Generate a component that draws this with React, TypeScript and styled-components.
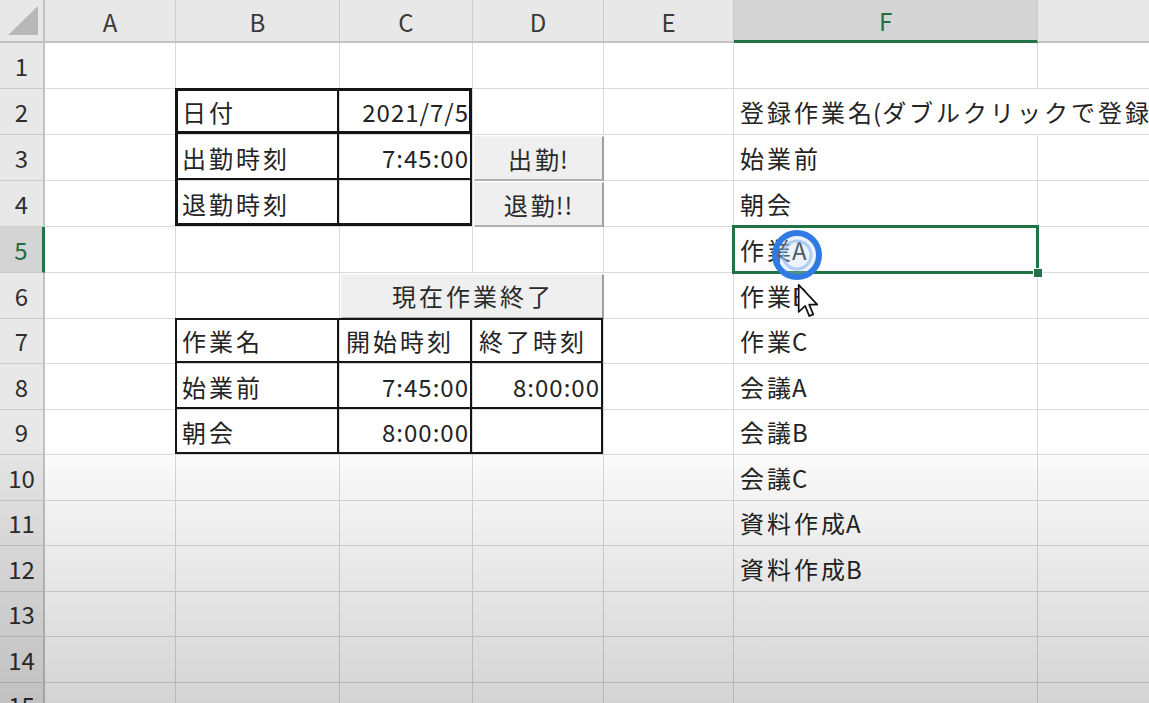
import { Fragment } from 'react';
import styled, { createGlobalStyle, css } from 'styled-components';

const GlobalStyle = createGlobalStyle`
  html, body {
    margin: 0;
    padding: 0;
    background: #fff;
    overflow: hidden;
  }
  body {
    font-family: "Noto Sans CJK JP", "Noto Sans", sans-serif;
  }
`;

type Frame = [number, number, number, number]; // top right bottom left

type CellSpec = {
  text?: string;
  align?: 'left' | 'right';
  frame?: Frame;
  button?: boolean;
  span?: number;
  active?: boolean;
  spill?: boolean;
};

const LETTERS = ['A', 'B', 'C', 'D', 'E', 'F', 'G'];
const ROWS = Array.from({ length: 15 }, (_, i) => i + 1);

const data: Record<number, Record<string, CellSpec>> = {
  2: {
    B: { text: '日付', frame: [3, 2, 3, 3] },
    C: { text: '2021/7/5', align: 'right', frame: [3, 3, 3, 0] },
    F: { text: '登録作業名(ダブルクリックで登録', spill: true },
  },
  3: {
    B: { text: '出勤時刻', frame: [0, 2, 2, 3] },
    C: { text: '7:45:00', align: 'right', frame: [0, 2, 2, 0] },
    D: { text: '出勤!', button: true },
    F: { text: '始業前' },
  },
  4: {
    B: { text: '退勤時刻', frame: [0, 2, 3, 3] },
    C: { frame: [0, 2, 3, 0] },
    D: { text: '退勤!!', button: true },
    F: { text: '朝会' },
  },
  5: {
    F: { text: '作業A', active: true },
  },
  6: {
    C: { text: '現在作業終了', button: true, span: 2 },
    F: { text: '作業B' },
  },
  7: {
    B: { text: '作業名', frame: [2, 2, 2, 2] },
    C: { text: '開始時刻', frame: [2, 2, 2, 0] },
    D: { text: '終了時刻', frame: [2, 2, 2, 0] },
    F: { text: '作業C' },
  },
  8: {
    B: { text: '始業前', frame: [0, 2, 2, 2] },
    C: { text: '7:45:00', align: 'right', frame: [0, 2, 2, 0] },
    D: { text: '8:00:00', align: 'right', frame: [0, 2, 2, 0] },
    F: { text: '会議A' },
  },
  9: {
    B: { text: '朝会', frame: [0, 2, 2, 2] },
    C: { text: '8:00:00', align: 'right', frame: [0, 2, 2, 0] },
    D: { frame: [0, 2, 2, 0] },
    F: { text: '会議B' },
  },
  10: { F: { text: '会議C' } },
  11: { F: { text: '資料作成A' } },
  12: { F: { text: '資料作成B' } },
};

const GREEN = '#217346';
const GRID = '#d9d9d9';

const Sheet = styled.div`
  position: relative;
  display: grid;
  grid-template-columns: 45px 131px 164px 133px 131px 130px 304px 300px;
  grid-template-rows: 43px repeat(5, 46px) repeat(10, 45.5px);
  width: 1149px;
  height: 703px;
  overflow: hidden;
  font-size: 24px;
  letter-spacing: 1px;
  color: #242424;

  &::after {
    content: '';
    position: absolute;
    inset: 0;
    pointer-events: none;
    z-index: 5;
    background: linear-gradient(
      to bottom,
      rgba(0, 0, 0, 0) 445px,
      rgba(0, 0, 0, 0.03) 470px,
      rgba(0, 0, 0, 0.17) 703px
    );
  }
`;

const Corner = styled.div`
  display: flex;
  align-items: flex-end;
  justify-content: flex-end;
  padding: 0 5px 6px 0;
  background: #e8e8e8;
  border-right: 2px solid #c2c2c2;
  border-bottom: 2px solid #c2c2c2;
`;

const CornerMark = styled.div`
  width: 30px;
  height: 29px;
  background: #b8b8b8;
  clip-path: polygon(100% 0, 100% 100%, 0 100%);
`;

const ColHead = styled.div<{ $active?: boolean }>`
  display: flex;
  align-items: center;
  justify-content: center;
  padding-top: 1px;
  background: ${p => (p.$active ? '#d4d4d4' : '#e8e8e8')};
  color: ${p => (p.$active ? '#1f6e43' : '#3a3a3a')};
  border-right: 1px solid #cbcbcb;
  border-bottom: ${p => (p.$active ? `3px solid ${GREEN}` : '2px solid #c2c2c2')};
  letter-spacing: 0;
`;

const RowHead = styled.div<{ $active?: boolean }>`
  display: flex;
  align-items: center;
  justify-content: center;
  background: ${p => (p.$active ? '#d4d4d4' : '#e8e8e8')};
  color: ${p => (p.$active ? '#1f6e43' : '#2e2e2e')};
  border-right: ${p => (p.$active ? `3px solid ${GREEN}` : '2px solid #c2c2c2')};
  border-bottom: 1px solid #cbcbcb;
  letter-spacing: 0;
`;

const Cell = styled.div<{ $align?: string; $frame?: Frame; $active?: boolean; $spill?: boolean }>`
  position: relative;
  display: flex;
  align-items: center;
  justify-content: ${p => (p.$align === 'right' ? 'flex-end' : 'flex-start')};
  padding: 0 3px 0 6px;
  min-width: 0;
  white-space: nowrap;
  border-right: 1px solid ${p => (p.$spill ? 'transparent' : GRID)};
  border-bottom: 1px solid ${GRID};

  ${p =>
    p.$frame &&
    css`
      &::after {
        content: '';
        position: absolute;
        top: -1px;
        left: -1px;
        right: 0;
        bottom: 0;
        border-style: solid;
        border-color: #151515;
        border-width: ${p.$frame.map(w => `${w}px`).join(' ')};
        pointer-events: none;
        z-index: 1;
      }
    `}

  ${p =>
    p.$active &&
    css`
      &::after {
        content: '';
        position: absolute;
        top: -2px;
        left: -2px;
        right: -2px;
        bottom: -2px;
        border: 3px solid ${GREEN};
        pointer-events: none;
        z-index: 2;
      }
      &::before {
        content: '';
        position: absolute;
        right: -6px;
        bottom: -6px;
        width: 8px;
        height: 8px;
        background: ${GREEN};
        border: 1px solid #fff;
        z-index: 3;
      }
    `}
`;

// kanji / kana run a little wider than the latin glyphs in the source font
const Wide = styled.span`
  letter-spacing: 3px;
  margin-right: -2px;
`;

const SheetButton = styled.div<{ $span?: number }>`
  grid-column: span ${p => p.$span ?? 1};
  display: flex;
  align-items: center;
  justify-content: center;
  margin: 1px 0 0 1px;
  background: #efefef;
  color: #2a2a2a;
  border-top: 1px solid #f6f6f6;
  border-left: 1px solid #f2f2f2;
  border-right: 2px solid #9e9e9e;
  border-bottom: 2px solid #b0b0b0;
`;

const ClickRing = styled.svg`
  position: absolute;
  left: 769px;
  top: 227px;
  width: 56px;
  height: 56px;
  z-index: 6;
  pointer-events: none;
`;

const Pointer = styled.svg`
  position: absolute;
  left: 797px;
  top: 283px;
  width: 22px;
  height: 36px;
  z-index: 7;
  pointer-events: none;
`;

const CJK = /([\u3000-\u30ff\u4e00-\u9fff]+)/;

function Label({ text }: { text?: string }) {
  if (!text) return null;
  return (
    <>
      {text.split(CJK).map((part, i) =>
        CJK.test(part) ? <Wide key={i}>{part}</Wide> : <Fragment key={i}>{part}</Fragment>
      )}
    </>
  );
}

function renderRow(r: number) {
  const specs = data[r] ?? {};
  const out = [];
  let skip = 0;
  for (const letter of LETTERS) {
    if (skip > 0) {
      skip--;
      continue;
    }
    const s = specs[letter];
    const key = `${letter}${r}`;
    if (s?.button) {
      skip = (s.span ?? 1) - 1;
      out.push(
        <SheetButton key={key} $span={s.span}>
          <Label text={s.text} />
        </SheetButton>
      );
      continue;
    }
    out.push(
      <Cell key={key} $align={s?.align} $frame={s?.frame} $active={s?.active} $spill={s?.spill}>
        <Label text={s?.text} />
      </Cell>
    );
  }
  return out;
}

export default function App() {
  return (
    <>
      <GlobalStyle />
      <Sheet>
        <Corner>
          <CornerMark />
        </Corner>
        {LETTERS.map(l => (
          <ColHead key={l} $active={l === 'F'}>
            {l}
          </ColHead>
        ))}
        {ROWS.map(r => (
          <Fragment key={r}>
            <RowHead $active={r === 5}>{r}</RowHead>
            {renderRow(r)}
          </Fragment>
        ))}

        <ClickRing viewBox="0 0 56 56">
          <circle cx="28" cy="28" r="20" fill="rgba(190,215,250,0.3)" />
          <circle cx="28" cy="28" r="14" fill="none" stroke="rgba(140,180,240,0.6)" strokeWidth="3" />
          <circle cx="28" cy="28" r="22" fill="none" stroke="#2f7be3" strokeWidth="6" />
        </ClickRing>

        <Pointer viewBox="0 0 13 21">
          <path
            d="M1 1 L1 17 L4.8 13.4 L7.3 19.4 L9.6 18.4 L7.2 12.6 L12 12.6 Z"
            fill="#fff"
            stroke="#111"
            strokeWidth="1"
            strokeLinejoin="round"
          />
        </Pointer>
      </Sheet>
    </>
  );
}
